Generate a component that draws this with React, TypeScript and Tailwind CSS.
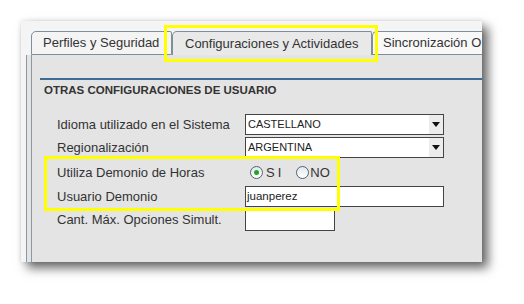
import React from "react";

const font = { fontFamily: '"Liberation Sans", Arial, sans-serif' };

const Select = ({ value }: { value: string }) => (
  <div className="flex h-[21px] w-[199px] items-stretch border border-[#444] bg-white">
    <span className="flex-1 pl-[2px] text-[11px] leading-[19px] text-[#222]">{value}</span>
    <span className="flex w-[14px] items-center justify-center bg-[#ececec]">
      <svg width="8" height="5" viewBox="0 0 8 5">
        <path d="M0 0 H8 L4 5 Z" fill="#111" />
      </svg>
    </span>
  </div>
);

const Radio = ({ checked }: { checked?: boolean }) => (
  <span className="flex h-[13px] w-[13px] items-center justify-center rounded-full border border-[#4b6478] bg-gradient-to-b from-[#e4e8ec] to-white">
    {checked && <span className="h-[5px] w-[5px] rounded-full bg-[#1fa51f]" />}
  </span>
);

const Row = ({ label, className, children }: { label: string; className: string; children: React.ReactNode }) => (
  <div className={`flex items-center ${className}`}>
    <div className="w-[213px] shrink-0 whitespace-nowrap pl-[25px] text-[13px] text-[#333]">{label}</div>
    {children}
  </div>
);

export default function App() {
  return (
    <div className="relative h-[304px] w-[524px] overflow-hidden bg-white" style={font}>
      <div className="ml-[21px] mt-[21px] flex h-[241px] w-[461px] flex-col overflow-hidden bg-[#f4f4f4] shadow-[6px_6px_10px_rgba(0,0,0,0.6),0_0_5px_rgba(0,0,0,0.12)]">
        {/* tabs */}
        <div className="flex h-[34px] shrink-0 items-end pl-[10px]">
          <div className="flex h-[24px] w-[141px] shrink-0 items-center rounded-tl-[5px] rounded-tr-[2px] border border-[#7f8f99] bg-[#f4f4f4] pl-[11px] text-[13px] text-[#333]">
            Perfiles y Seguridad
          </div>
          <div className="flex h-[24px] w-[200px] shrink-0 items-center rounded-tl-[5px] rounded-tr-[2px] border border-b-0 border-[#7f8f99] bg-[#e9e9e9] pl-[12px] text-[13px] text-[#333]">
            Configuraciones y Actividades
          </div>
          <div className="flex h-[24px] w-[110px] shrink-0 items-center overflow-hidden whitespace-nowrap rounded-tl-[5px] border border-r-0 border-[#7f8f99] bg-[#f8f8f8] pl-[10px] text-[13px] text-[#333]">
            Sincronización O
          </div>
        </div>
        {/* body */}
        <div className="ml-[5px] flex flex-1 border-l border-[#8a98a2] bg-[#e4e4e4]">
          <div className="ml-[4px] flex-1 border-l border-[#8a98a2]">
            <div className="ml-[8px] mt-[23px] border-t-2 border-[#3d6b96] pl-[4px] pt-[2px] text-[11.5px] font-bold leading-[16px] text-[#333]">
              OTRAS CONFIGURACIONES DE USUARIO
            </div>
            <Row label="Idioma utilizado en el Sistema" className="mt-[16px] h-[21px]">
              <Select value="CASTELLANO" />
            </Row>
            <Row label="Regionalización" className="mt-[2px] h-[21px]">
              <Select value="ARGENTINA" />
            </Row>
            <Row label="Utiliza Demonio de Horas" className="mt-[2px] h-[25px]">
              <div className="flex items-center pl-[5px] text-[13px] text-[#333]">
                <Radio checked />
                <span className="ml-[3px] tracking-[3px]">SI</span>
                <span className="ml-[12px]"><Radio /></span>
                <span className="ml-[1px]">NO</span>
              </div>
            </Row>
            <Row label="Usuario Demonio" className="mt-[1px] h-[21px]">
              <div className="h-[21px] w-[199px] border border-[#444] bg-white pl-[1px] text-[11.5px] leading-[19px] text-[#222]">
                juanperez
              </div>
            </Row>
            <Row label="Cant. Máx. Opciones Simult." className="mt-[2px] h-[22px]">
              <div className="h-[22px] w-[90px] border border-[#444] bg-white" />
            </Row>
          </div>
        </div>
      </div>
      {/* highlight boxes */}
      <div className="absolute left-[164px] top-[25px] h-[37px] w-[214px] border-[3px] border-[#ffff00]" />
      <div className="absolute left-[44px] top-[156px] h-[55px] w-[296px] border-[3px] border-[#ffff00]" />
    </div>
  );
}
